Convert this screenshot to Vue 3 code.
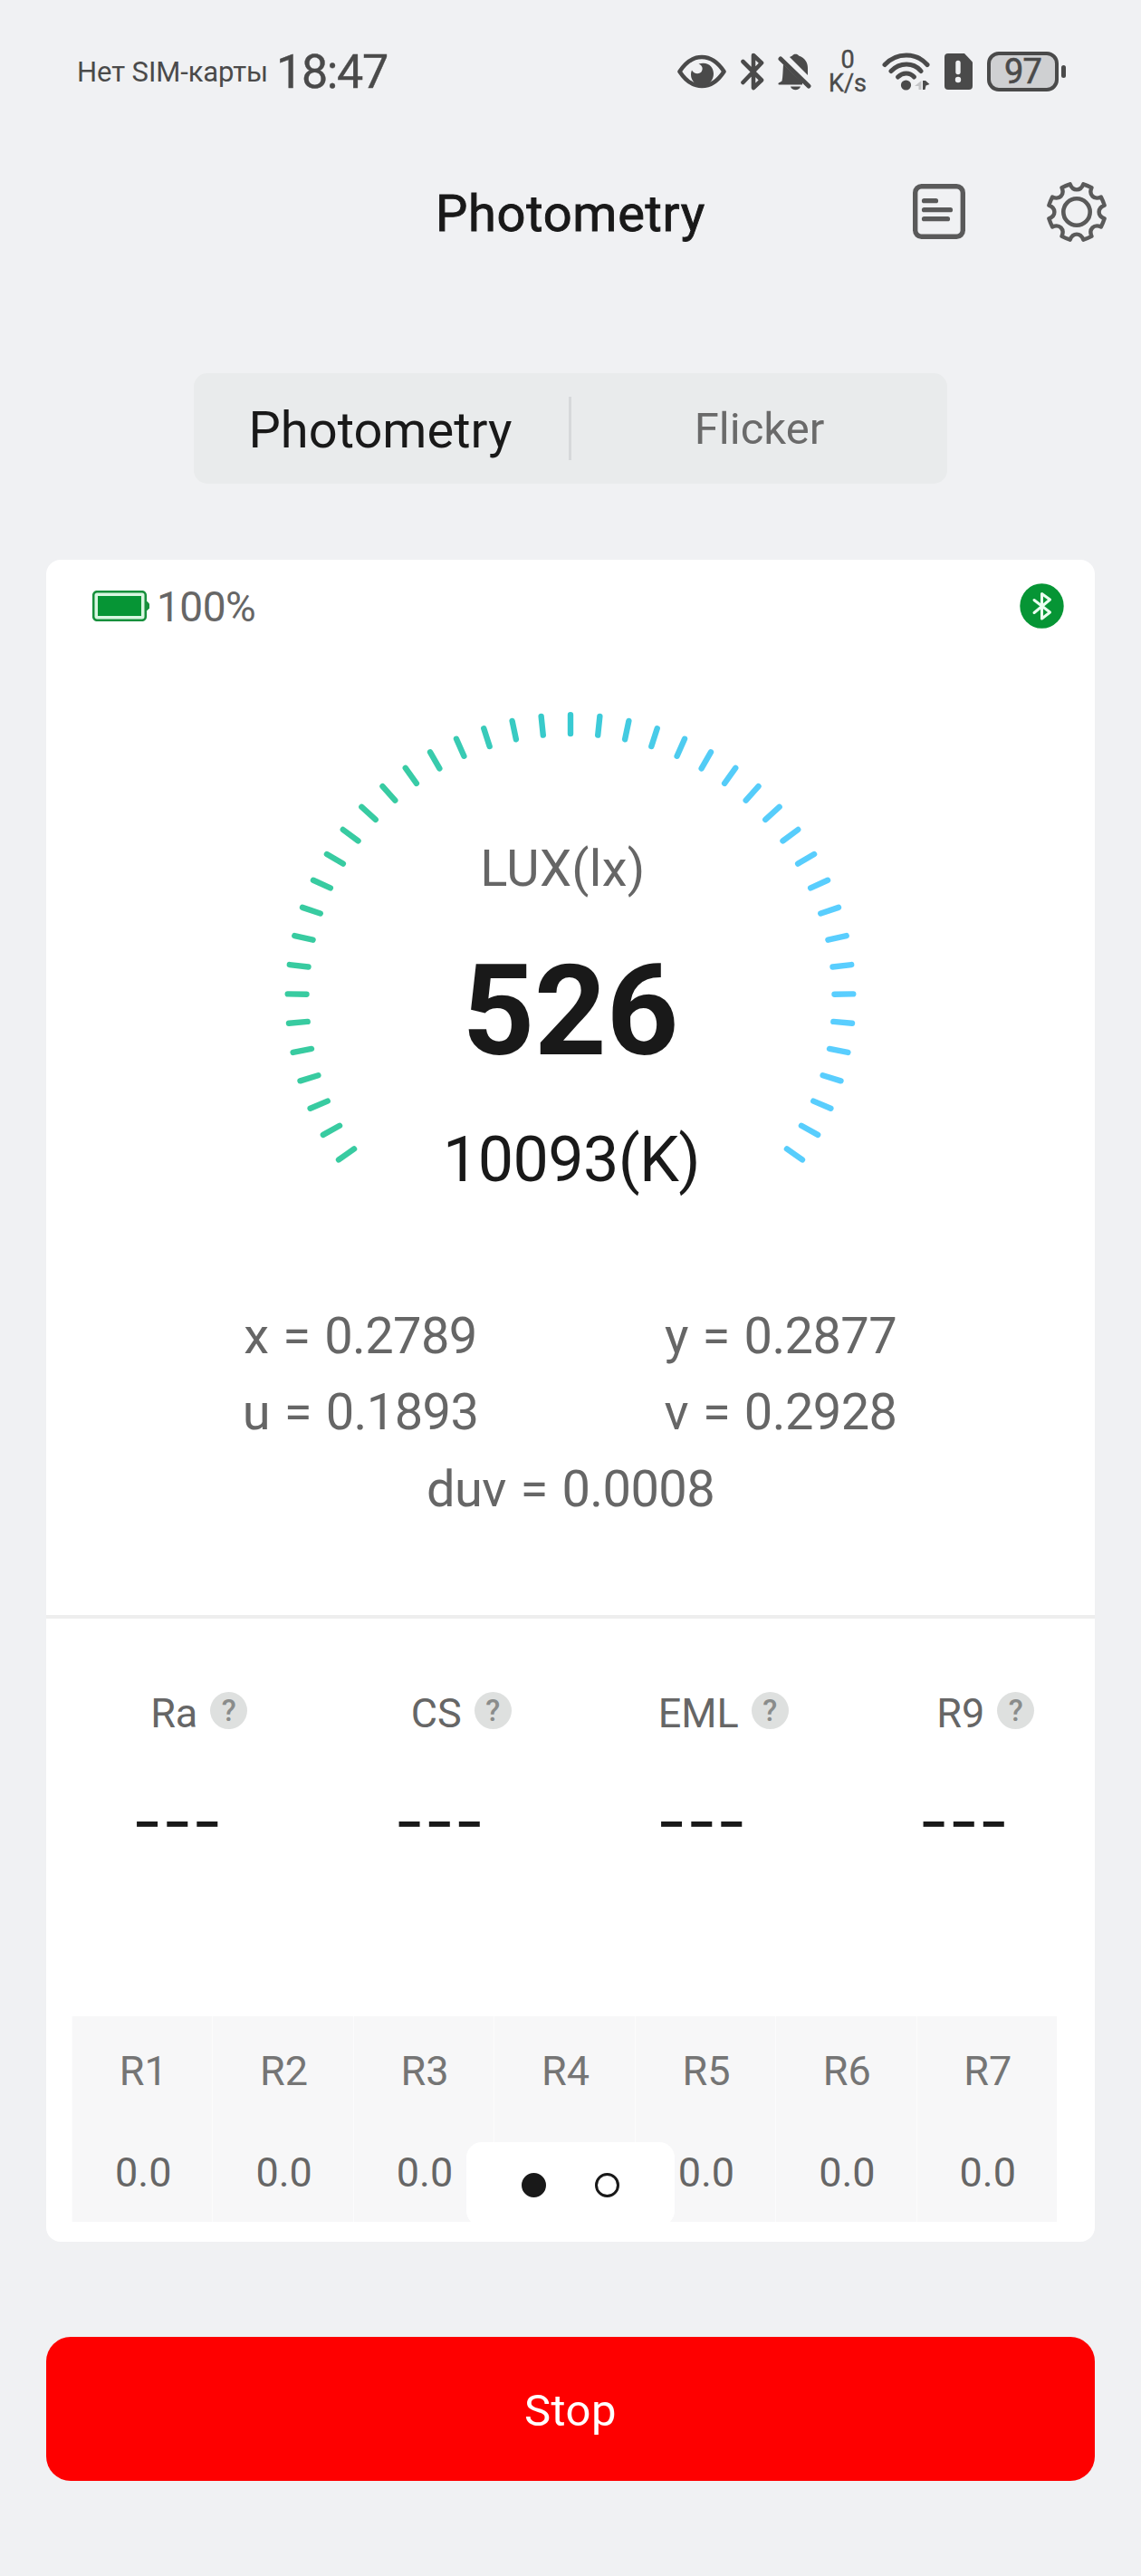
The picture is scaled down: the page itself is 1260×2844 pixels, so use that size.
<template>
  <div class="screen">

    <div class="status">
      <span class="carrier">Нет SIM-карты</span>
      <span class="clock">18:47</span>

      <div class="status-icons">
        <svg class="eye" width="54" height="38" viewBox="0 0 54 38">
          <path d="M2.500 19C9 9 17.500 3 27 3s18 6 24.500 16C45 29 36.500 35 27 35S9 29 2.500 19z" fill="none" stroke="#4a4a4a" stroke-width="4.600" stroke-linejoin="round" />
          <path d="M23.500 10.500C34 7.500 40 14 40 21.500c0 7-5.500 13-12.500 13S15 29.500 15 22.500c0-2 .3-3.500 1-5 2 4.500 9 5 11 1 1.500-3 .5-6.500-3.500-8z" fill="#4a4a4a" />
        </svg>
        <svg class="bt" width="26" height="42" viewBox="0 0 26 42">
          <path d="M2.500 10L23 30.500 14 39V3l9 8.500L2.500 33" fill="none" stroke="#4a4a4a" stroke-width="4.600" stroke-linecap="round" stroke-linejoin="round" />
        </svg>
        <svg class="bell" width="37" height="42" viewBox="0 0 37 42">
          <path d="M13 5l3-1.500C17 1 22 1 23 3.500 30 6 33 11 33 17v8z" fill="#4a4a4a" />
          <path d="M6 13L27 33v2.500H1.500C0 35.500 0 33.500 2 33l2.500-1.500C5.500 27 5.500 20 6 13z" fill="#4a4a4a" />
          <path d="M14 37.500h11c-1.500 5-9.500 5-11 0z" fill="#4a4a4a" />
          <path d="M3 7l31 30" stroke="#4a4a4a" stroke-width="5" stroke-linecap="round" />
        </svg>
        <div class="speed">0<br>K/s</div>
        <svg class="wifi" width="54" height="42" viewBox="0 0 54 42">
          <g fill="none" stroke="#4a4a4a" stroke-width="5" stroke-linecap="round">
            <path d="M3 13.500C16-.5 38-.5 50 13.500" />
            <path d="M10 20.500c9.500-10 25-10 33 0" />
            <path d="M17.500 27c5.500-5.500 13-5.500 18 0" />
          </g>
          <circle cx="26.500" cy="36" r="5.600" fill="#4a4a4a" />
          <path d="M43.500 31v10h-3v-4H36z" fill="#c4c5c7" />
          <path d="M45 31l3 0 4.500 4-4 1.500-1 4.500H45z" fill="#4a4a4a" />
        </svg>
        <svg class="sim" width="31" height="40" viewBox="0 0 31 40">
          <path d="M4 0h18l9 9.500V36a4 4 0 0 1-4 4H4a4 4 0 0 1-4-4V4a4 4 0 0 1 4-4z" fill="#4a4a4a" />
          <path d="M15 10.500v10" stroke="#f0f1f3" stroke-width="5.400" stroke-linecap="round" />
          <circle cx="15" cy="29" r="3.200" fill="#f0f1f3" />
        </svg>
        <div class="phone-battery">97</div>
        <span class="nub"></span>
      </div>
    </div>

    <header class="header">
      <h1>Photometry</h1>
      <div class="header-actions">
        <svg width="58" height="61" viewBox="0 0 58 61">
          <rect x="2.700" y="2.700" width="52.600" height="55.600" rx="7" fill="none" stroke="#5a5a5a" stroke-width="5.400" />
          <path d="M12.500 18.700h13M12.500 28.700h29M12.500 38.700h26" stroke="#5a5a5a" stroke-width="5.200" stroke-linecap="round" />
        </svg>
        <svg width="68" height="68" viewBox="-34 -34 68 68">
          <path :d="gearPath" fill="none" stroke="#5a5a5a" stroke-width="4.400" stroke-linejoin="round" />
          <circle r="14.700" fill="none" stroke="#5a5a5a" stroke-width="4.600" />
        </svg>
      </div>
    </header>

    <div class="tabs">
      <div v-for="tab in tabs" :key="tab" class="tab" :class="{ active: tab === activeTab }" @click="activeTab = tab">{{ tab }}</div>
    </div>

    <div class="card">
      <div class="device">
        <svg width="63" height="34" viewBox="0 0 63 34">
          <path d="M58 12h2.500l2.500 2.500v5L60.500 22H58z" fill="#17903c" />
          <rect x="1.200" y="1.200" width="57.600" height="31.600" rx="4" fill="#d9f7e1" stroke="#17903c" stroke-width="2.600" />
          <rect x="6" y="6" width="48" height="22" fill="#069535" />
        </svg>
        <span class="charge">100%</span>
        <svg class="linked" width="49" height="50" viewBox="0 0 49 50">
          <ellipse cx="24.500" cy="25" rx="24.200" ry="24.800" fill="#069535" />
          <path d="M16 18.500l17.500 13.500L24.500 39V11.500l9 6.500L16 32.500" fill="none" stroke="#eafff0" stroke-width="3" stroke-linecap="round" stroke-linejoin="round" />
        </svg>
      </div>

      <div class="gauge">
        <svg class="dial" width="680" height="620" viewBox="0 0 680 620">
          <defs>
            <linearGradient id="dial" gradientUnits="userSpaceOnUse" x1="25" y1="0" x2="655" y2="0">
              <stop offset="0" stop-color="#38cba0" />
              <stop offset="0.2" stop-color="#38cba2" />
              <stop offset="0.5" stop-color="#38cad2" />
              <stop offset="0.75" stop-color="#54ccf8" />
              <stop offset="1" stop-color="#5aceff" />
            </linearGradient>
          </defs>
          <path :d="ticks" stroke="url(#dial)" stroke-width="6.400" stroke-linecap="round" />
        </svg>
        <div class="gauge-text">
          <span class="unit">LUX(lx)</span>
          <span class="lux">526</span>
          <span class="kelvin">10093(K)</span>
        </div>
      </div>

      <div class="readings">
        <span v-for="r in readings" :key="r.name" :class="{ wide: r.name === 'duv' }">{{ r.name }} = {{ r.value }}</span>
      </div>

      <div class="metrics">
        <div v-for="m in metrics" :key="m" class="metric">
          <div class="metric-label">
            <span>{{ m }}</span>
            <i class="help">?</i>
          </div>
          <div class="metric-value">---</div>
        </div>
      </div>

      <div class="indexes">
        <div v-for="n in 7" :key="n" class="index">
          <span class="index-name">R{{ n }}</span>
          <span class="index-value">0.0</span>
        </div>
      </div>

      <div class="pager">
        <span class="dot current"></span>
        <span class="dot"></span>
      </div>
    </div>

    <button class="stop">Stop</button>
  </div>
</template>

<script setup>
import { ref } from 'vue'

const tabs = ['Photometry', 'Flicker']
const activeTab = ref('Photometry')

const readings = [
  { name: 'x', value: '0.2789' },
  { name: 'y', value: '0.2877' },
  { name: 'u', value: '0.1893' },
  { name: 'v', value: '0.2928' },
  { name: 'duv', value: '0.0008' }
]

const metrics = ['Ra', 'CS', 'EML', 'R9']

// angle is in degrees, clockwise from the top
function polar(cx, cy, r, angle) {
  const a = angle * Math.PI / 180
  return `${(cx + r * Math.sin(a)).toFixed(2)} ${(cy - r * Math.cos(a)).toFixed(2)}`
}

// 21 ticks on each side of the top one
let ticks = ''
for (let i = -21; i <= 21; i++) {
  const a = i * 5.95
  ticks += `M${polar(340, 381.5, 291.5, a)}L${polar(340, 381.5, 312.3, a)}`
}

// eight teeth with hollow gaps between them
let gearPath = ''
for (let i = 0; i < 8; i++) {
  const mid = 22.5 + i * 45
  gearPath += (i ? 'L' : 'M') + polar(0, 0, 31.5, mid - 9)
  gearPath += `Q${polar(0, 0, 31.5, mid)} ${polar(0, 0, 31.5, mid + 9)}`
  gearPath += `C${polar(0, 0, 23, mid + 12)} ${polar(0, 0, 23, mid + 33)} ${polar(0, 0, 31.5, mid + 36)}`
}
gearPath += 'Z'
</script>

<style>
  body{
    background: #f0f1f3;
  }
</style>

<style scoped>
  .screen{
    width: 1260px;
    height: 2844px;
    box-sizing: border-box;
    background: #f0f1f3;
    font-family: Roboto, "Open Sans", sans-serif;
    color: #191919;
    overflow: hidden;
  }
  .status{
    height: 157px;
    display: flex;
    align-items: center;
    padding: 0 83px 0 85px;
    color: #4a4a4a;
  }
  .carrier{
    font-size: 31px;
    padding-top: 2px;
    letter-spacing: -0.1px;
  }
  .clock{
    font-size: 52px;
    margin-left: 9px;
    padding-top: 2px;
    letter-spacing: -1.3px;
    -webkit-text-stroke: 0.4px #4a4a4a;
  }
  .status-icons{
    margin-left: auto;
    display: flex;
    align-items: center;
  }
  .bt{
    margin-left: 16px;
  }
  .bell{
    margin-left: 15px;
  }
  .speed{
    width: 42px;
    margin: 0 0 0 19px;
    font-size: 27px;
    line-height: 26px;
    text-align: center;
    -webkit-text-stroke: 0.4px #4a4a4a;
  }
  .wifi{
    margin-left: 17px;
  }
  .sim{
    margin-left: 15px;
  }
  .phone-battery{
    width: 79px;
    height: 44px;
    box-sizing: border-box;
    margin-left: 16px;
    border: 4px solid #4a4a4a;
    border-radius: 13px;
    background: #cfd0d2;
    font-size: 38px;
    line-height: 37px;
    text-align: center;
    letter-spacing: -0.8px;
    -webkit-text-stroke: 0.6px #4a4a4a;
  }
  .nub{
    width: 5px;
    height: 14px;
    margin-left: 3px;
    border-radius: 3px;
    background: #4a4a4a;
  }
  .header{
    height: 153px;
    display: grid;
    grid-template-columns: 1fr auto 1fr;
    align-items: center;
    padding: 0 37px;
  }
  h1{
    grid-column: 2;
    margin: 0;
    padding-top: 5px;
    font-size: 56px;
    font-weight: 400;
    letter-spacing: 0.7px;
    -webkit-text-stroke: 0.9px #191919;
  }
  .header-actions{
    display: flex;
    align-items: center;
    justify-content: flex-end;
    gap: 89px;
  }
  .tabs{
    width: 832px;
    height: 122px;
    margin: 102px auto 0;
    display: grid;
    grid-template-columns: 414px 1fr;
    align-items: center;
    border-radius: 15px;
    background: #e9ebec;
  }
  .tab{
    line-height: 68px;
    text-align: center;
    font-size: 49px;
    padding-top: 2px;
    color: #6a6a6a;
  }
  .tab + .tab{
    border-left: 3px solid #d6d8da;
  }
  .tab.active{
    font-size: 56px;
    padding-top: 4px;
    padding-right: 2px;
    color: #191919;
  }
  .card{
    position: relative;
    width: 1158px;
    height: 1857px;
    margin: 84px auto 0;
    border-radius: 16px;
    background: #fff;
  }
  .device{
    height: 102px;
    display: flex;
    align-items: center;
    padding: 0 34px 0 51px;
  }
  .charge{
    margin: 1px 0 0 8px;
    font-size: 46px;
    letter-spacing: -0.5px;
    color: #666;
  }
  .linked{
    margin-left: auto;
  }
  .gauge{
    display: grid;
    justify-items: center;
    height: 620px;
  }
  .dial, .gauge-text{
    grid-area: 1 / 1;
  }
  .gauge-text{
    display: flex;
    flex-direction: column;
    align-items: center;
    padding-top: 199px;
  }
  .unit{
    font-size: 56px;
    line-height: 80px;
    letter-spacing: 0.3px;
    padding-right: 17px;
    color: #666;
  }
  .lux{
    margin-top: 48px;
    font-size: 139px;
    font-weight: 700;
    line-height: 140px;
  }
  .kelvin{
    margin-top: 53px;
    font-size: 70px;
    line-height: 80px;
    letter-spacing: -0.6px;
    padding-left: 2px;
  }
  .readings{
    width: 928px;
    margin: 93px auto 0;
    display: grid;
    grid-template-columns: 1fr 1fr;
    grid-auto-rows: 84.3px;
    justify-items: center;
    align-items: center;
    font-size: 56px;
    line-height: 84px;
    letter-spacing: -0.6px;
    word-spacing: 2.5px;
    color: #666;
  }
  .readings .wide{
    grid-column: 1 / 3;
  }
  .metrics{
    height: 440px;
    margin-top: 97px;
    box-sizing: border-box;
    border-top: 4px solid #eee;
    padding-top: 73px;
    display: grid;
    grid-template-columns: repeat(4, 1fr);
  }
  .metric-label{
    height: 60px;
    display: flex;
    align-items: center;
    justify-content: center;
    gap: 14px;
    padding-left: 48px;
    font-size: 45px;
    color: #666;
  }
  .metric-label span{
    padding-top: 3px;
  }
  .help{
    width: 41px;
    height: 41px;
    margin-bottom: 3px;
    border-radius: 50%;
    background: #dee0df;
    color: #8a8c8b;
    font-size: 33px;
    font-style: normal;
    font-weight: 500;
    line-height: 42px;
    text-align: center;
  }
  .metric-value{
    margin-top: 45px;
    text-align: center;
    font-family: Inter, sans-serif;
    font-size: 72px;
    line-height: 90px;
  }
  .indexes{
    width: 1088px;
    height: 227px;
    margin: 3px 0 0 28px;
    display: grid;
    grid-template-columns: repeat(7, 1fr);
    background: #f7f7f8;
  }
  .index{
    display: grid;
    grid-template-rows: 119px 108px;
    align-items: center;
    justify-items: center;
    font-size: 45px;
    padding-left: 2px;
    border-left: 1px solid #fcfcfc;
  }
  .index-name{
    padding-top: 2px;
    color: #757575;
  }
  .index-value{
    color: #666;
  }
  /* floats over the bottom row of the table */
  .pager{
    position: absolute;
    left: 464px;
    top: 1747px;
    width: 230px;
    height: 93px;
    box-sizing: border-box;
    padding-top: 2px;
    display: flex;
    align-items: center;
    justify-content: center;
    gap: 54px;
    border-radius: 17px;
    background: #fff;
  }
  .dot{
    width: 27px;
    height: 27px;
    box-sizing: border-box;
    border: 3px solid #191919;
    border-radius: 50%;
  }
  .dot.current{
    background: #191919;
  }
  .stop{
    display: block;
    width: 1158px;
    height: 159px;
    margin: 105px auto 0;
    padding: 4px 0 0;
    border: 0;
    border-radius: 27px;
    background: #fe0000;
    color: #fff;
    font-family: inherit;
    font-size: 49px;
    letter-spacing: 0.5px;
    cursor: pointer;
  }
</style>
